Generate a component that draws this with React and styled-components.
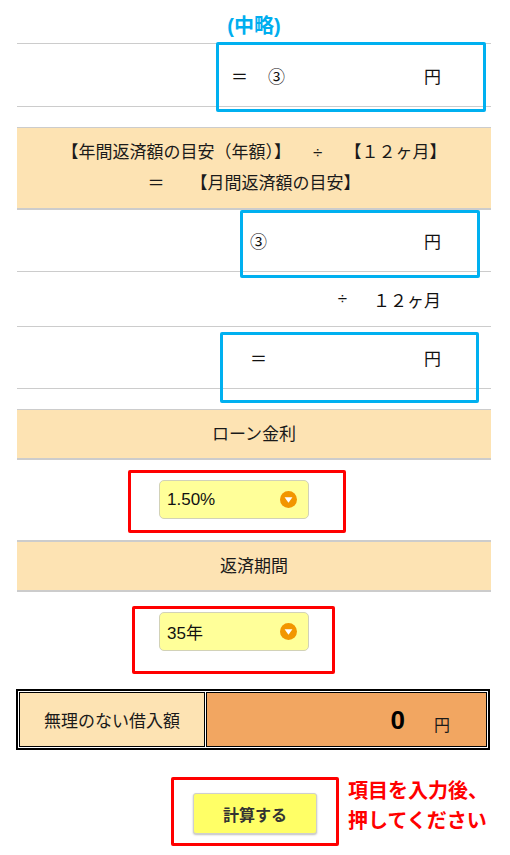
import React from 'react';
import styled, { createGlobalStyle } from 'styled-components';

const GlobalStyle = createGlobalStyle`
    body {
        margin: 0;
        background: #fff;
        font-family: "Liberation Sans", "Noto Sans CJK JP", sans-serif;
        color: #111;
    }
`;

const Page = styled.div`
    width: 474px;
    margin-left: 17px;
    display: flex;
    flex-direction: column;
`;

const Title = styled.div`
    height: 43px;
    padding-top: 5px;
    box-sizing: border-box;
    display: flex;
    align-items: center;
    justify-content: center;
    color: #00aeef;
    font-size: 20px;
    font-weight: bold;
`;

const Row = styled.div`
    position: relative;
    height: ${props => props.$h}px;
    display: flex;
    align-items: center;
    font-size: 17px;
    border-top: ${props => props.$top ? '1px solid #cccccc' : 'none'};
    border-bottom: 1px solid #cccccc;
    padding-left: ${props => props.$pl || 0}px;
    padding-right: 50px;
    justify-content: ${props => props.$end ? 'flex-end' : 'flex-start'};
`;

const Mark = styled.span`
    width: 17px;
    text-align: center;
    margin-right: ${props => props.$gap || 0}px;
`;

const Spacer = styled.span`
    flex: 1;
`;

const Op = styled.span`
    margin: 0 ${props => props.$space}px;
`;

const Highlight = styled.div`
    position: absolute;
    box-sizing: border-box;
    border: 3px solid #00b0f0;
    border-radius: 2px;
    left: ${props => props.$left}px;
    top: ${props => props.$top}px;
    width: ${props => props.$w}px;
    height: ${props => props.$h}px;
`;

const Header = styled.div`
    margin-top: ${props => props.$mt || 0}px;
    height: ${props => props.$h}px;
    background: #fde3b3;
    border-top: ${props => props.$bt || 1}px solid #cccccc;
    border-bottom: 2px solid #cccccc;
    display: flex;
    flex-direction: column;
    align-items: center;
    justify-content: center;
    font-size: 17px;
    line-height: 31px;
    color: #1a1a1a;
`;

const SelectRow = styled.div`
    height: ${props => props.$h}px;
    box-sizing: border-box;
    padding-top: ${props => props.$pt}px;
    padding-left: ${props => props.$pl}px;
    display: flex;
    align-items: flex-start;
`;

const RedFrame = styled.div`
    box-sizing: border-box;
    width: ${props => props.$w}px;
    height: ${props => props.$h}px;
    border: 3px solid #ff0000;
    border-radius: 2px;
    padding-left: ${props => props.$pl}px;
    padding-top: ${props => props.$pt}px;
`;

const Select = styled.div`
    box-sizing: border-box;
    width: 150px;
    height: 39px;
    background: #ffff99;
    border: 1px solid #d2d2b8;
    border-radius: 5px;
    display: flex;
    align-items: center;
    justify-content: space-between;
    padding: 0 11px 0 7px;
    font-size: 17px;
    color: #111;
`;

const ResultTable = styled.div`
    margin-left: -1px;
    width: 474px;
    box-sizing: border-box;
    border: 2px solid #000;
    padding: 1px;
    display: grid;
    grid-template-columns: 186px 281px;
    gap: 1px;
`;

const Cell = styled.div`
    box-sizing: border-box;
    height: 55px;
    border: 1px solid #000;
    background: ${props => props.$amount ? '#f2a661' : '#fde3b3'};
    display: flex;
    align-items: center;
    justify-content: ${props => props.$amount ? 'flex-end' : 'center'};
    padding-right: ${props => props.$amount ? 36 : 0}px;
    font-size: 17px;
    color: #1a1a1a;
`;

const Amount = styled.span`
    font-size: 26px;
    font-weight: bold;
    color: #000;
    margin-right: 29px;
    line-height: 1;
`;

const Unit = styled.span`
    font-size: 16px;
    margin-top: 8px;
`;

const ActionRow = styled.div`
    margin-top: 27px;
    padding-left: 154px;
    display: flex;
    align-items: flex-start;
    gap: 9px;
`;

const CalcButton = styled.button`
    width: 124px;
    height: 41px;
    background: #ffff66;
    border: 1px solid #cfcfcf;
    border-radius: 3px;
    box-shadow: 0 1px 2px rgba(0, 0, 0, 0.25);
    font-family: "Liberation Sans", "Noto Sans CJK JP", sans-serif;
    font-size: 16px;
    font-weight: bold;
    color: #333;
    cursor: pointer;
`;

const Note = styled.div`
    margin-top: -1px;
    color: #ff0000;
    font-size: 20px;
    font-weight: bold;
    line-height: 30px;
`;

const DropIcon = () => (
    <svg width="17" height="17" viewBox="0 0 16 16">
        <circle cx="8" cy="8" r="8" fill="#f29600" />
        <polygon points="4.3,5.8 11.7,5.8 8,11" fill="#fff" />
    </svg>
);

export default function App() {
    return (
        <Page>
            <GlobalStyle />
            <Title>(中略)</Title>

            <Row $h={62} $top $pl={214}>
                <Mark $gap={20}>＝</Mark>
                <Mark>③</Mark>
                <Spacer />
                <span>円</span>
                <Highlight $left={199} $top={-2} $w={270} $h={70} />
            </Row>

            <Header $mt={20} $h={80}>
                <div>【年間返済額の目安（年額）】<Op $space={22}>÷</Op>【１２ヶ月】</div>
                <div>＝<Op $space={13} />【月間返済額の目安】</div>
            </Header>

            <Row $h={61} $pl={233}>
                <Mark>③</Mark>
                <Spacer />
                <span>円</span>
                <Highlight $left={223} $top={0} $w={240} $h={68} />
            </Row>

            <Row $h={54} $end>
                <span>÷</span>
                <Op $space={13} />
                <span>１２ヶ月</span>
            </Row>

            <Row $h={61} $pl={233}>
                <Mark>＝</Mark>
                <Spacer />
                <span>円</span>
                <Highlight $left={203} $top={5} $w={259} $h={71} />
            </Row>

            <Header $mt={20} $h={48}>ローン金利</Header>

            <SelectRow $h={80} $pt={10} $pl={111}>
                <RedFrame $w={218} $h={63} $pl={28} $pt={7}>
                    <Select>
                        <span>1.50%</span>
                        <DropIcon />
                    </Select>
                </RedFrame>
            </SelectRow>

            <Header $bt={2} $h={48}>返済期間</Header>

            <SelectRow $h={97} $pt={14} $pl={115}>
                <RedFrame $w={203} $h={68} $pl={24} $pt={3}>
                    <Select>
                        <span>35年</span>
                        <DropIcon />
                    </Select>
                </RedFrame>
            </SelectRow>

            <ResultTable>
                <Cell>無理のない借入額</Cell>
                <Cell $amount>
                    <Amount>0</Amount>
                    <Unit>円</Unit>
                </Cell>
            </ResultTable>

            <ActionRow>
                <RedFrame $w={168} $h={69} $pl={19} $pt={13}>
                    <CalcButton>計算する</CalcButton>
                </RedFrame>
                <Note>
                    <div>項目を入力後、</div>
                    <div>押してください</div>
                </Note>
            </ActionRow>
        </Page>
    );
}
